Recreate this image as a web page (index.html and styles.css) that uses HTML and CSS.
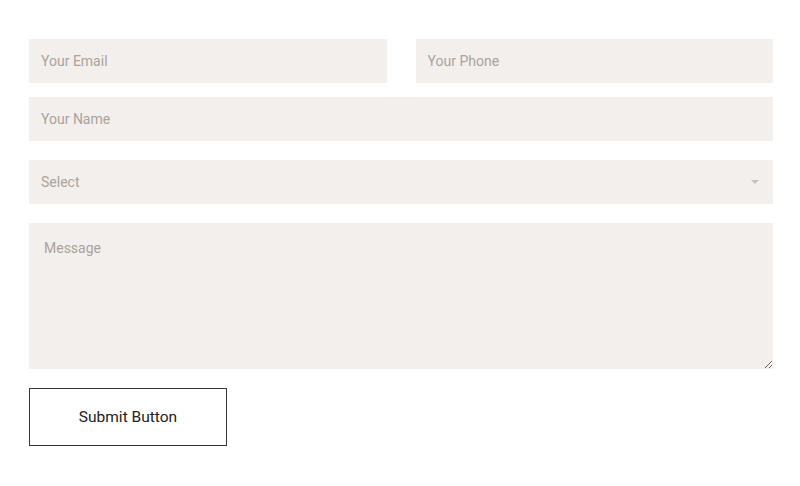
FILE: index.html
```html
<!DOCTYPE html>
<html lang="en">
<head>
  <meta charset="UTF-8">
  <title>Contact Form</title>
  <link rel="stylesheet" href="styles.css">
</head>
<body>
<form class="contact-form">
  <div class="form-row">
    <input type="email" class="field" placeholder="Your Email">
    <input type="tel" class="field" placeholder="Your Phone">
  </div>
  <input type="text" class="field name-field" placeholder="Your Name">
  <div class="select-wrap">
    <select class="field select-field">
      <option>Select</option>
    </select>
    <span class="select-arrow"></span>
  </div>
  <textarea class="field message-field" placeholder="Message"></textarea>
  <button type="submit" class="submit-btn">Submit Button</button>
</form>
</body>
</html>
```

FILE: styles.css
```css
body {
  margin: 0;
  padding: 0;
  background-color: #ffffff;
  font-family: Roboto, 'Liberation Sans', sans-serif;
}

.contact-form {
  display: flex;
  flex-direction: column;
  padding: 39px 27px 0 29px;
}

.form-row {
  display: flex;
  gap: 29px;
  margin-bottom: 14px;
}

.field {
  box-sizing: border-box;
  width: 100%;
  height: 44px;
  padding: 0 12px;
  border: none;
  border-radius: 0;
  background-color: #f3efec;
  font-family: Roboto, 'Liberation Sans', sans-serif;
  font-size: 14px;
  color: #a9a39e;
  outline: none;
}

.field::placeholder {
  color: #a9a39e;
}

.name-field {
  margin-bottom: 19px;
}

.select-wrap {
  position: relative;
  margin-bottom: 19px;
}

.select-field {
  appearance: none;
  -webkit-appearance: none;
}

.select-arrow {
  position: absolute;
  right: 14px;
  top: 20px;
  width: 0;
  height: 0;
  border-left: 4px solid transparent;
  border-right: 4px solid transparent;
  border-top: 4px solid #c7c2be;
}

.message-field {
  height: 146px;
  padding: 17px 15px;
  resize: vertical;
  margin-bottom: 19px;
}

.submit-btn {
  box-sizing: border-box;
  width: 198px;
  height: 58px;
  background-color: #ffffff;
  border: 1px solid #333333;
  border-radius: 0;
  font-family: Roboto, 'Liberation Sans', sans-serif;
  font-size: 15.5px;
  color: #222222;
  cursor: pointer;
}
```
